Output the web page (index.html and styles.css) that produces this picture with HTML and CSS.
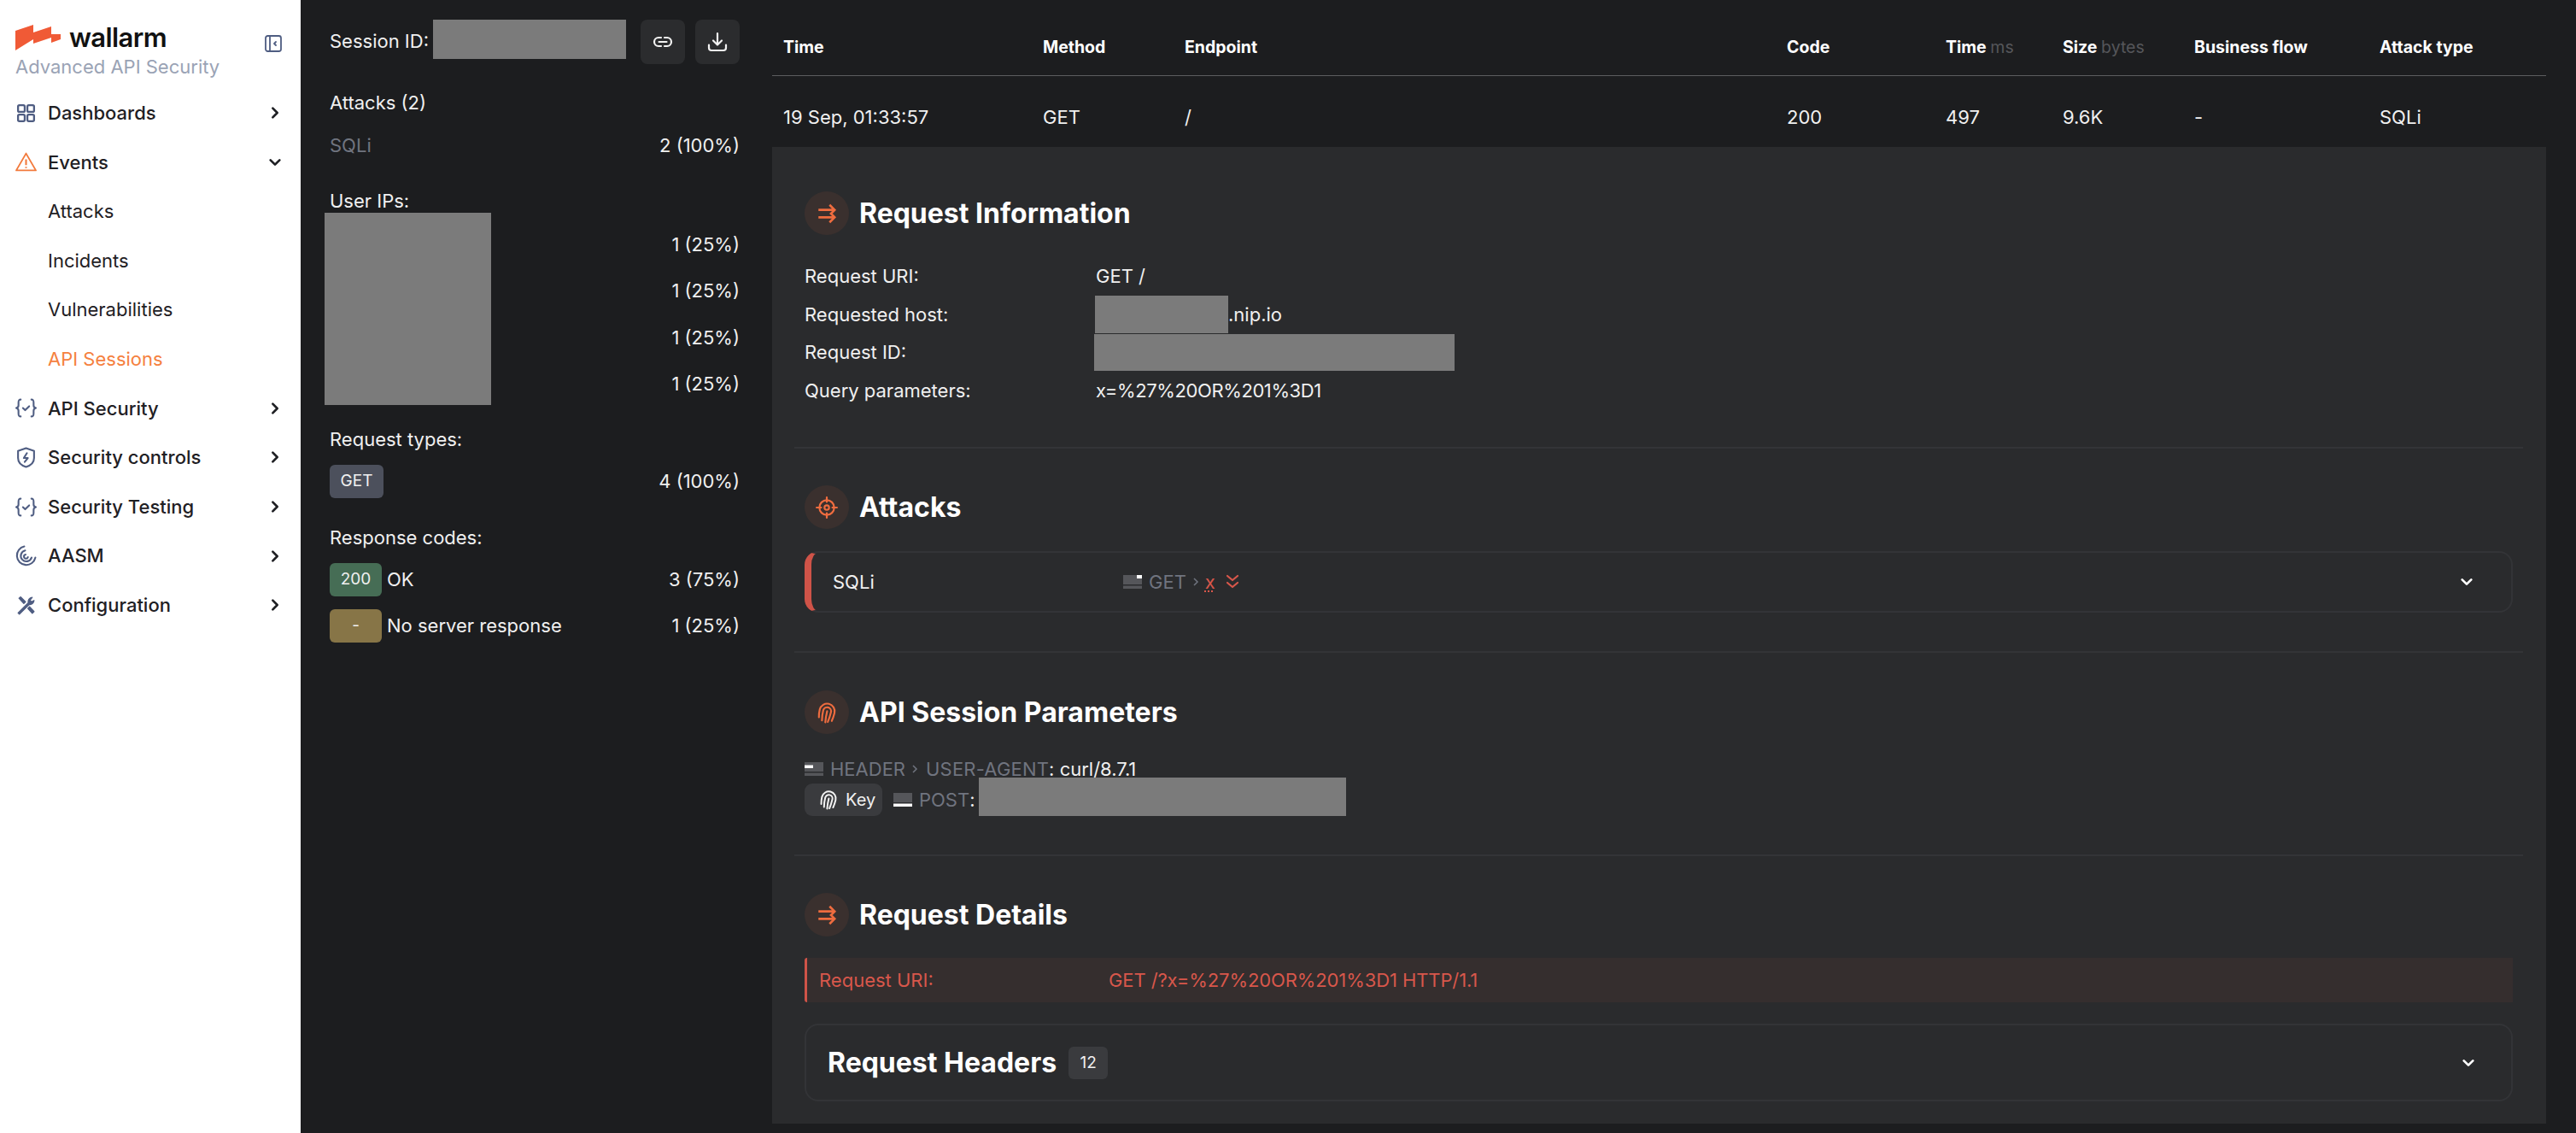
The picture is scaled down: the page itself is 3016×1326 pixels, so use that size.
FILE: index.html
```html
<!DOCTYPE html>
<html lang="en">
<head>
<meta charset="utf-8">
<title>Wallarm API Sessions</title>
<link rel="stylesheet" href="styles.css">
</head>
<body>
<aside class="sidebar">
  <div class="brand">
    <div class="brand-row">
      <svg class="logo" viewBox="0 0 53 30"><path d="M0 7 L21 0 L21 9 L42 2 L42 11 L53 11 L53 17 L42 21 L42 15 L21 22 L21 17 L0 30 Z" fill="#f05a36"/></svg>
      <span class="wordmark">wallarm</span>
      <svg class="collapse" viewBox="0 0 20 20" fill="none" stroke="#4f5d82" stroke-width="1.8"><rect x="1" y="1" width="18" height="18" rx="2.5"/><path d="M6 1v18"/><path d="M13 8l-2 2 2 2" stroke-linecap="round" stroke-linejoin="round"/></svg>
    </div>
    <div class="tagline">Advanced API Security</div>
  </div>
  <nav class="nav">
    <a class="nav-item"><svg class="nav-icon" viewBox="0 0 24 24" fill="none" stroke="#4f5d82" stroke-width="2.2"><rect x="3" y="3" width="7.5" height="7.5" rx="1.5"/><rect x="13.5" y="3" width="7.5" height="7.5" rx="1.5"/><rect x="3" y="13.5" width="7.5" height="7.5" rx="1.5"/><rect x="13.5" y="13.5" width="7.5" height="7.5" rx="1.5"/></svg><span class="nav-label">Dashboards</span><svg class="chev" viewBox="0 0 12 12"><path d="M4 2l4 4-4 4"/></svg></a>
    <a class="nav-item"><svg class="nav-icon" viewBox="0 0 24 24" fill="none" stroke="#f27a3c" stroke-width="1.8" stroke-linejoin="round"><path d="M12 2.500L23 21.500H1Z"/><path d="M12 9v6.500M12 17.500v1.500" stroke-width="2"/></svg><span class="nav-label">Events</span><svg class="chev" viewBox="0 0 12 12"><path d="M2 4l4 4 4-4"/></svg></a>
    <a class="nav-item sub">Attacks</a>
    <a class="nav-item sub">Incidents</a>
    <a class="nav-item sub">Vulnerabilities</a>
    <a class="nav-item sub active">API Sessions</a>
    <a class="nav-item"><svg class="nav-icon" viewBox="0 0 24 24" fill="none" stroke="#4f5d82" stroke-width="2" stroke-linecap="round" stroke-linejoin="round"><path d="M6 2.500C3.500 2.500 3.500 4 3.500 6v3c0 1.500-.7 2.500-2.500 3 1.800.5 2.500 1.500 2.500 3v3c0 2 0 3.500 2.500 3.500M18 2.500c2.500 0 2.500 1.500 2.500 3.500v3c0 1.500.7 2.500 2.500 3-1.800.5-2.500 1.500-2.500 3v3c0 2 0 3.500-2.500 3.500"/><path d="M8.500 12l2.500 2.500 4.500-4.500"/></svg><span class="nav-label">API Security</span><svg class="chev" viewBox="0 0 12 12"><path d="M4 2l4 4-4 4"/></svg></a>
    <a class="nav-item"><svg class="nav-icon" viewBox="0 0 24 24" fill="none" stroke="#4f5d82" stroke-width="2" stroke-linejoin="round"><path d="M12 1.500l9 3v8c0 5-4 8.500-9 10-5-1.500-9-5-9-10v-8Z"/><path d="M13 7l-3.500 5.500h4.500L10.500 17" stroke-linecap="round"/></svg><span class="nav-label">Security controls</span><svg class="chev" viewBox="0 0 12 12"><path d="M4 2l4 4-4 4"/></svg></a>
    <a class="nav-item"><svg class="nav-icon" viewBox="0 0 24 24" fill="none" stroke="#4f5d82" stroke-width="2" stroke-linecap="round" stroke-linejoin="round"><path d="M6 2.500C3.500 2.500 3.500 4 3.500 6v3c0 1.500-.7 2.500-2.500 3 1.800.5 2.500 1.500 2.500 3v3c0 2 0 3.500 2.500 3.500M18 2.500c2.500 0 2.500 1.500 2.500 3.500v3c0 1.500.7 2.500 2.500 3-1.800.5-2.500 1.500-2.500 3v3c0 2 0 3.500-2.500 3.500"/><path d="M8.500 12l2.500 2.500 4.500-4.500"/></svg><span class="nav-label">Security Testing</span><svg class="chev" viewBox="0 0 12 12"><path d="M4 2l4 4-4 4"/></svg></a>
    <a class="nav-item"><svg class="nav-icon" viewBox="0 0 24 24" fill="none" stroke="#4f5d82" stroke-width="2" stroke-linecap="round"><path d="M10 1.500A10.500 10.500 0 1 0 22.500 14"/><path d="M11 6A6.200 6.200 0 1 0 18.200 14"/><path d="M11.500 10.500a2.300 2.300 0 1 0 2.600 3"/></svg><span class="nav-label">AASM</span><svg class="chev" viewBox="0 0 12 12"><path d="M4 2l4 4-4 4"/></svg></a>
    <a class="nav-item"><svg class="nav-icon" viewBox="0 0 24 24" fill="#4f5d82" stroke="#4f5d82" stroke-width="1.200" stroke-linejoin="round"><path d="M3 20.500L14.500 9c-.7-2.500 1-5.500 4.500-6l-2.500 3 1.500 2 3-1.500c-.2 3.300-3 5-5.500 4.500L4.500 22Z"/><path d="M4 4l2-1.500 5.500 5.500-2 2Z"/><path d="M14 15.500l2-2 5 5.500-2 2Z"/></svg><span class="nav-label">Configuration</span><svg class="chev" viewBox="0 0 12 12"><path d="M4 2l4 4-4 4"/></svg></a>
  </nav>
</aside>

<section class="summary">
  <div class="session">
    <span class="session-label">Session ID:</span>
    <span class="redact session-id"></span>
    <button class="icon-btn"><svg viewBox="0 0 24 24" fill="none" stroke="#f2f2f2" stroke-width="2.200" stroke-linecap="round"><path d="M10 7H7a5 5 0 0 0 0 10h3M14 7h3a5 5 0 0 1 0 10h-3M7.500 12h9"/></svg></button>
    <button class="icon-btn"><svg viewBox="0 0 24 24" fill="none" stroke="#f2f2f2" stroke-width="2.200" stroke-linecap="round" stroke-linejoin="round"><path d="M12 2v13M7 10.500l5 5 5-5"/><path d="M2 15.500v3.500a3 3 0 0 0 3 3h14a3 3 0 0 0 3-3v-3.500"/></svg></button>
  </div>
  <h3 class="group-title attacks-title">Attacks (2)</h3>
  <div class="stat stat-sqli"><span class="muted">SQLi</span><span>2 (100%)</span></div>
  <h3 class="group-title ips-title">User IPs:</h3>
  <div class="ip-list">
    <span class="redact ip-block"></span>
    <div class="stat"><span></span><span>1 (25%)</span></div>
    <div class="stat"><span></span><span>1 (25%)</span></div>
    <div class="stat"><span></span><span>1 (25%)</span></div>
    <div class="stat"><span></span><span>1 (25%)</span></div>
  </div>
  <h3 class="group-title types-title">Request types:</h3>
  <div class="stat stat-badge"><span class="badge badge-get">GET</span><span>4 (100%)</span></div>
  <h3 class="group-title codes-title">Response codes:</h3>
  <div class="stat stat-code"><span class="code-cell"><span class="badge badge-ok">200</span>OK</span><span>3 (75%)</span></div>
  <div class="stat stat-code"><span class="code-cell"><span class="badge badge-none">-</span>No server response</span><span>1 (25%)</span></div>
</section>

<main class="main">
  <svg class="defs" aria-hidden="true"><symbol id="fingerprint" viewBox="0 0 24 24"><g transform="rotate(14 12 12)"><path d="M5 19c-.8-3-1.200-6-1.200-8.500a8.200 8.200 0 0 1 16.400 0c0 3-.2 6-.8 9"/><path d="M9 21.500c-.8-3.500-1.300-7.500-1.300-11a4.300 4.300 0 0 1 8.600 0c0 4-.2 7.500-.8 11"/><path d="M12 10.500c0 4 .3 8 1 12"/></g></symbol></svg>
  <div class="table-row table-head">
    <span>Time</span><span>Method</span><span>Endpoint</span><span>Code</span>
    <span>Time <em>ms</em></span><span>Size <em>bytes</em></span><span>Business flow</span><span>Attack type</span>
  </div>
  <div class="table-row table-body">
    <span>19 Sep, 01:33:57</span><span>GET</span><span>/</span><span>200</span>
    <span>497</span><span>9.6K</span><span>-</span><span>SQLi</span>
  </div>
  <div class="detail">
    <section class="block first">
      <header class="block-head">
        <span class="circle"><svg viewBox="0 0 24 24" fill="none" stroke="#ee6c3f" stroke-width="2.400" stroke-linejoin="miter"><path d="M3 8h17M3 16h17M15 2.500l5.500 5.500-4 4 4 4-5.500 5.500"/></svg></span>
        <h2>Request Information</h2>
      </header>
      <dl class="info">
        <dt>Request URI:</dt><dd>GET /</dd>
        <dt>Requested host:</dt><dd><span class="redact host"></span>.nip.io</dd>
        <dt>Request ID:</dt><dd><span class="redact reqid"></span></dd>
        <dt>Query parameters:</dt><dd class="query">x=%27%20OR%201%3D1</dd>
      </dl>
    </section>
    <section class="block second">
      <header class="block-head">
        <span class="circle"><svg viewBox="0 0 24 24" fill="none" stroke="#ee6c3f" stroke-width="2" stroke-linecap="round"><circle cx="12" cy="12" r="8"/><circle cx="12" cy="12" r="2.500"/><path d="M12 1v5M12 18v5M1 12h5M18 12h5"/></svg></span>
        <h2>Attacks</h2>
      </header>
      <div class="attack-row">
        <span class="attack-name">SQLi</span>
        <span class="attack-path">
          <svg class="pt" viewBox="0 0 22 16"><rect width="22" height="11" fill="#55565a"/><rect width="22" height="4" y="12.500" fill="#55565a"/><rect x="16" width="6" height="4" fill="#fff"/></svg>
          <span class="muted">GET</span><svg class="sep" viewBox="0 0 8 14" fill="none" stroke="#70747f" stroke-width="1.500"><path d="M2 3l4 4-4 4"/></svg>
          <span class="param">x</span>
          <svg class="dbl" viewBox="0 0 16 18" fill="none" stroke="#d8574b" stroke-width="2.200" stroke-linecap="round" stroke-linejoin="round"><path d="M2 2l6 5 6-5M2 10l6 5 6-5"/></svg>
        </span>
        <svg class="chev light" viewBox="0 0 12 12"><path d="M2 4l4 4 4-4"/></svg>
      </div>
    </section>
    <section class="block">
      <header class="block-head">
        <span class="circle"><svg viewBox="0 0 24 24" fill="none" stroke="#ee6c3f" stroke-width="2" stroke-linecap="round"><use href="#fingerprint"/></svg></span>
        <h2>API Session Parameters</h2>
      </header>
      <div class="params">
        <div class="param-row first-row">
          <svg class="pt" viewBox="0 0 22 16"><rect width="22" height="11" fill="#55565a"/><rect width="22" height="4" y="12.500" fill="#55565a"/><rect y="3.500" width="10" height="3.500" fill="#fff"/></svg>
          <span class="muted">HEADER</span><svg class="sep" viewBox="0 0 8 14" fill="none" stroke="#70747f" stroke-width="1.500"><path d="M2 3l4 4-4 4"/></svg><span class="muted agent">USER-AGENT</span><span class="value">: curl/8.7.1</span>
        </div>
        <div class="param-row second-row">
          <span class="key-chip"><svg viewBox="0 0 24 24" fill="none" stroke="#f2f2f2" stroke-width="2" stroke-linecap="round"><use href="#fingerprint"/></svg>Key</span>
          <svg class="pt" viewBox="0 0 22 16"><rect width="22" height="11" fill="#55565a"/><rect width="22" height="4" y="12.500" fill="#fff"/></svg>
          <span class="muted">POST</span><span class="value">:</span><span class="redact post"></span>
        </div>
      </div>
    </section>
    <section class="block last">
      <header class="block-head">
        <span class="circle"><svg viewBox="0 0 24 24" fill="none" stroke="#ee6c3f" stroke-width="2.400" stroke-linejoin="miter"><path d="M3 8h17M3 16h17M15 2.500l5.500 5.500-4 4 4 4-5.500 5.500"/></svg></span>
        <h2>Request Details</h2>
      </header>
      <div class="uri-row"><span class="uri-label">Request URI:</span><span class="uri-value">GET /?x=%27%20OR%201%3D1 HTTP/1.1</span></div>
      <div class="headers-box">
        <h2>Request Headers</h2><span class="count">12</span>
        <svg class="chev light" viewBox="0 0 12 12"><path d="M2 4l4 4 4-4"/></svg>
      </div>
    </section>
  </div>
</main>
</body>
</html>
```
FILE: styles.css
```css
* { box-sizing: border-box; }
html, body { margin: 0; height: 1326px; overflow: hidden; }
body {
  display: flex;
  background: #1c1d1f;
  color: #f0f0f0;
  font: 400 22px/1.3 Inter, "Noto Sans", sans-serif;
}
h2, h3, dl, dd, dt { margin: 0; font: inherit; }
.defs { display: none; }

/* sidebar */
.sidebar { width: 352px; flex: none; height: 100%; background: #fff; color: #1f2024; padding: 29px 0 0 18px; }
.brand-row { display: flex; align-items: flex-start; height: 33px; }
.logo { width: 53px; height: 30px; flex: none; }
.wordmark { font-size: 31px; font-weight: 600; line-height: 30px; margin-left: 10px; letter-spacing: -0.6px; color: #111; }
.collapse { width: 20px; height: 20px; margin: 12px 0 0 115px; flex: none; }
.tagline { color: #9aa3b5; font-size: 22px; line-height: 32px; }
.nav { margin-top: 9.5px; padding-right: 22px; }
.nav-item { display: flex; align-items: center; height: 57.6px; font-weight: 500; }
.nav-item.sub { padding-left: 38px; font-weight: 400; }
.nav-item.active { color: #f5813f; }
.nav-icon { width: 25px; height: 25px; margin-right: 13px; flex: none; }
.nav-label { flex: 1; }
.chev { width: 16px; height: 16px; flex: none; fill: none; stroke: #1f2024; stroke-width: 2; stroke-linecap: round; stroke-linejoin: round; }
.chev.light { stroke: #fff; }

/* summary */
.summary { width: 552px; flex: none; padding: 22px 38px 0 34px; }
.session { display: flex; align-items: center; height: 53px; }
.session-label { margin-right: 5px; }
.redact { display: inline-block; background: #7b7b7b; }
.session-id { width: 226px; height: 46px; margin: -6px 17px 0 0; }
.icon-btn { width: 52px; height: 52px; margin-right: 12px; padding: 0; display: flex; align-items: center; justify-content: center; background: #2b2c2e; border: 0; border-radius: 8px; }
.icon-btn:last-child { margin-right: 0; }
.icon-btn svg { width: 24px; height: 24px; }
.group-title { line-height: 30px; }
.attacks-title { margin-top: 30px; }
.stat { display: flex; align-items: center; justify-content: space-between; }
.stat-sqli { height: 30px; margin-top: 20px; }
.muted { color: #70747f; }
.ips-title { margin-top: 35px; }
.ip-list { position: relative; padding-top: 9px; height: 239px; }
.ip-list .stat { height: 54.5px; }
.ip-block { position: absolute; left: -6px; top: -1px; width: 195px; height: 225px; }
.types-title { margin-top: 10px; }
.stat-badge { margin-top: 15px; height: 39px; }
.badge { display: inline-flex; align-items: center; justify-content: center; height: 39px; border-radius: 6px; font-size: 19px; color: #f0f0f0; }
.badge-get { width: 63px; background: #4c505c; }
.badge-ok { width: 61px; background: #466d55; margin-right: 6px; }
.badge-none { width: 61px; background: #877547; margin-right: 6px; }
.codes-title { margin-top: 31px; }
.stat-code { height: 39px; margin-top: 15px; }
.code-cell { display: flex; align-items: center; }

/* table */
.main { flex: 1; min-width: 0; padding-right: 35px; }
.table-row { display: grid; grid-template-columns: 304px 166px 705px 186px 137px 154px 217px 1fr; padding-left: 13px; align-items: center; }
.table-head { height: 89px; padding-top: 24px; border-bottom: 1px solid #5c5d5f; font-size: 19.5px; font-weight: 700; color: #fff; }
.table-head em { font-style: normal; font-weight: 400; color: #55565a; }
.table-body { height: 83px; padding-top: 13px; }

/* detail */
.detail { background: #2a2b2d; padding: 0 39px 26px 38px; height: 1143px; }
.block { padding: 44px 12px 45px; border-bottom: 2px solid #333437; margin: 0 -12px; }
.block.first { padding-top: 52px; padding-bottom: 44px; }
.block.second { padding-top: 43px; padding-bottom: 45px; }
.block.last { border-bottom: 0; padding-bottom: 0; padding-top: 43px; }
.block-head { display: flex; align-items: center; height: 51px; gap: 12px; }
.circle { width: 52px; height: 51px; border-radius: 50%; background: #3a302e; display: flex; align-items: center; justify-content: center; flex: none; }
.circle svg { width: 26px; height: 26px; }
.block-head h2, .headers-box h2 { font-size: 32px; font-weight: 700; color: #fff; }
.info { display: grid; grid-template-columns: 341px 1fr; grid-auto-rows: 44.6px; margin-top: 26px; align-items: center; }
.info dd { display: flex; align-items: center; }
.info .query { letter-spacing: -0.4px; }
.host { width: 156px; height: 44px; margin-left: -1px; }
.reqid { width: 422px; height: 43px; margin-left: -2px; }
.attack-row { display: flex; align-items: center; height: 72px; margin-top: 26px; padding: 0 44px 0 25px; border: 2px solid #333437; border-left: 8px solid #cf5348; border-radius: 16px; }
.attack-name { width: 340px; }
.attack-path { flex: 1; display: flex; align-items: center; color: #70747f; }
.pt { width: 22px; height: 16px; flex: none; margin-right: 8px; }
.sep { width: 8px; height: 14px; margin: 0 7px 0 7px; flex: none; }
.param { color: #d8574b; text-decoration: underline dotted; margin-right: 12px; }
.dbl { width: 16px; height: 18px; }
.params { margin-top: 23px; }
.param-row { display: flex; align-items: center; }
.first-row { height: 35px; }
.second-row { height: 38px; }
.agent { margin-left: 2px; letter-spacing: 0.2px; }
.key-chip { display: flex; align-items: center; height: 38px; width: 91px; padding-left: 16px; gap: 8px; background: #3a3b3e; border-radius: 9px; font-size: 20px; margin-right: 13px; }
.key-chip svg { width: 24px; height: 24px; }
.post { width: 430px; height: 45px; margin: -7px 0 0 4px; position: relative; z-index: 1; }
.uri-row { display: flex; align-items: center; height: 52px; margin-top: 25px; padding-left: 14px; background: #352e2e; border-left: 3px solid #cf5348; border-radius: 3px 0 0 3px; color: #d8574b; }
.uri-label { width: 339px; }
.uri-value { letter-spacing: -0.1px; }
.headers-box { display: flex; align-items: center; height: 91px; margin-top: 25px; padding: 0 42px 0 25px; border: 2px solid #333437; border-radius: 16px; }
.count { margin-left: 14px; width: 46px; height: 38px; display: flex; align-items: center; justify-content: center; background: #3a3b3e; border-radius: 6px; font-size: 19px; }
.headers-box .chev { margin-left: auto; }
```
